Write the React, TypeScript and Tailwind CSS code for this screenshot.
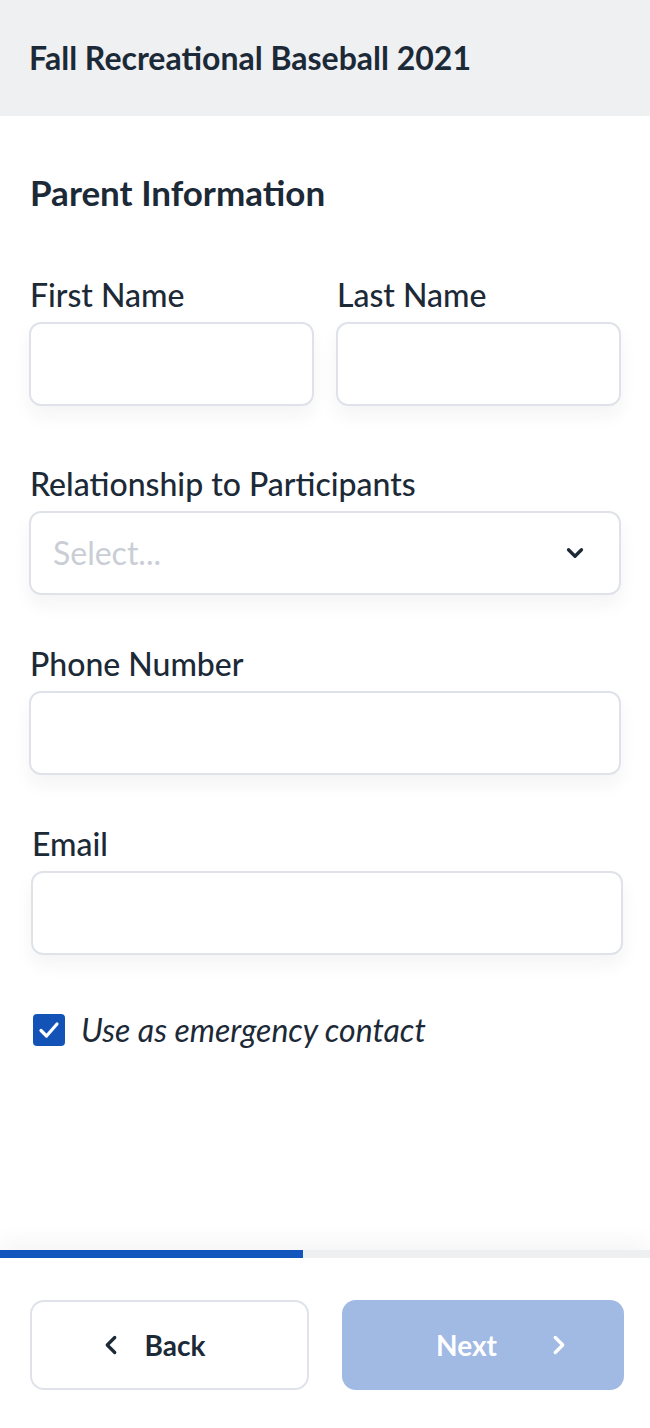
import React, { useState } from 'react';
import { ChevronDown, ChevronLeft, ChevronRight } from 'lucide-react';

interface FieldProps {
  label: string;
  className?: string;
  children?: React.ReactNode;
}

const Field: React.FC<FieldProps> = ({ label, className = '', children }) => (
  <div className={className}>
    <label className="block pl-[1px] text-[32px] leading-[36px] font-medium text-[#1c2937]">{label}</label>
    <div className="mt-[9px] h-[84px] rounded-[12px] border-2 border-[#dfe3e9] bg-white shadow-[0_10px_18px_rgba(30,40,60,0.05)] flex items-center">
      {children}
    </div>
  </div>
);

const App: React.FC = () => {
  const [emergency, setEmergency] = useState(true);

  return (
    <div className="h-[1428px] flex flex-col bg-white text-[#1c2937]" style={{ fontFamily: 'Lato, "Noto Sans", sans-serif' }}>
      <header className="h-[116px] shrink-0 bg-[#eff0f2] flex items-center pl-[29px]">
        <h1 className="text-[32px] leading-[36px] font-bold">Fall Recreational Baseball 2021</h1>
      </header>

      <main className="flex-1 px-[29px] pt-[58px]">
        <h2 className="pl-[1px] text-[35px] leading-[36px] font-bold">Parent Information</h2>

        <div className="mt-[67px] grid grid-cols-2 gap-[22px]">
          <Field label="First Name" />
          <Field label="Last Name" />
        </div>

        <Field label="Relationship to Participants" className="mt-[60px]">
          <span className="pl-[22px] flex-1 text-[32px] text-[#c9ced6]">Select...</span>
          <ChevronDown size={26} strokeWidth={3} className="mr-[31px] text-[#1c2937]" />
        </Field>

        <Field label="Phone Number" className="mt-[51px]" />

        <Field label="Email" className="mt-[51px] ml-[2px] -mr-[2px]" />

        <button
          type="button"
          onClick={() => setEmergency(!emergency)}
          className="mt-[57px] flex items-center gap-[16px] pl-[4px]"
        >
          <span className={`w-8 h-8 rounded-[4px] flex items-center justify-center ${emergency ? 'bg-[#1353b8]' : 'border-2 border-[#c9ced6] bg-white'}`}>
            {emergency && (
              <svg width="24" height="24" viewBox="0 0 24 24" fill="none" stroke="white" strokeWidth="3.2" strokeLinecap="round" strokeLinejoin="round">
                <path d="M4 12.5 9.5 18 20 6" />
              </svg>
            )}
          </span>
          <span className="text-[32px] leading-[36px] italic">Use as emergency contact</span>
        </button>
      </main>

      <footer className="shrink-0 shadow-[0_-10px_20px_rgba(0,0,0,0.04)]">
        <div className="h-2 bg-[#eeeff1]">
          <div className="h-full w-[303px] bg-[#1255bc]" />
        </div>
        <div className="grid grid-cols-[279px_282px] gap-[33px] pl-[30px] pt-[42px] pb-[38px]">
          <button className="h-[90px] rounded-[14px] border-2 border-[#dfe3e9] bg-white flex items-center justify-center gap-[19px] pr-[38px] text-[28px] font-bold text-[#1c2937]">
            <ChevronLeft size={30} strokeWidth={2.6} />
            <span>Back</span>
          </button>
          <button disabled className="h-[90px] rounded-[14px] bg-[#a0bae3] flex items-center justify-center gap-[47px] pl-[44px] text-[28px] font-bold text-white">
            <span>Next</span>
            <ChevronRight size={30} strokeWidth={2.6} />
          </button>
        </div>
      </footer>
    </div>
  );
};

export default App;
